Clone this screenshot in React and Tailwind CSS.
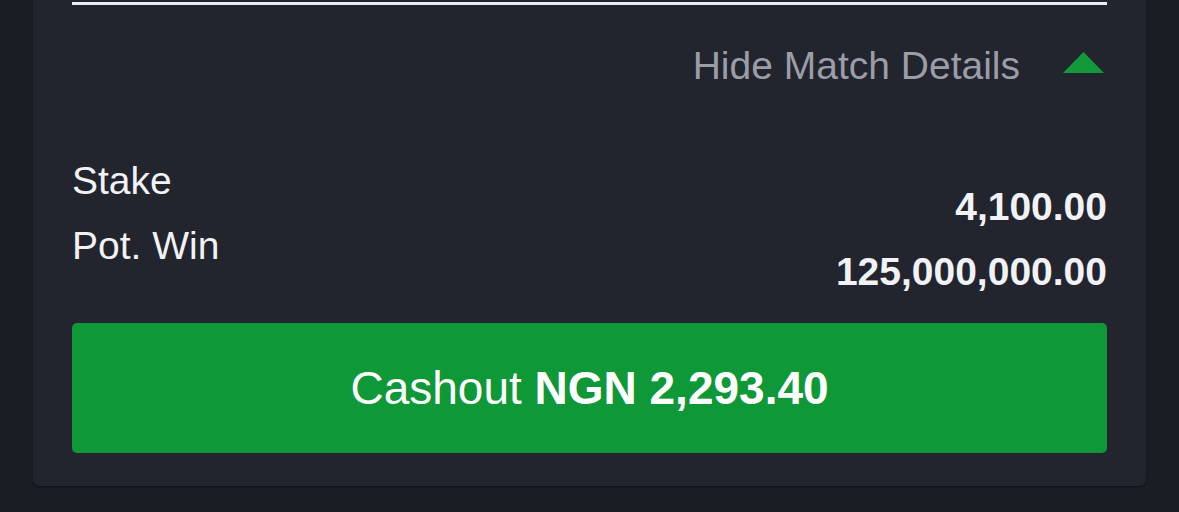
export default function App() {
  return (
    <div className="w-[1179px] h-[512px] bg-[#1b1d25] overflow-hidden" style={{ fontFamily: '"Liberation Sans", Arial, sans-serif' }}>
      <div className="ml-[33px] w-[1113px] bg-[#22252e] rounded-b-[7px] px-[39px] pt-[2px] pb-[33px] shadow-[0_1px_2px_rgba(0,0,0,0.35)]">
        <div className="h-[3px] bg-[#eceef3]" />
        <div className="mt-[36px] h-[50px] flex justify-end items-center">
          <span className="text-[39px] leading-[50px] text-[#9b9da7]">Hide Match Details</span>
          <svg width="41" height="21" viewBox="0 0 41 21" className="ml-[43px] mr-[3px] mt-[-7px]">
            <polygon points="20.5,0 41,21 0,21" fill="#129a3a" />
          </svg>
        </div>
        <div className="mt-[57px] flex justify-between text-[39px] text-[#f1f2f5]">
          <div className="flex flex-col leading-[65px]">
            <span>Stake</span>
            <span>Pot. Win</span>
          </div>
          <div className="flex flex-col items-end pt-[26px] leading-[65px] font-bold">
            <span>4,100.00</span>
            <span>125,000,000.00</span>
          </div>
        </div>
        <button className="mt-[19px] w-full h-[130px] bg-[#0f9837] rounded-[5px] flex items-center justify-center text-white text-[46px]">
          <span>Cashout&nbsp;</span>
          <span className="font-bold">NGN 2,293.40</span>
        </button>
      </div>
    </div>
  );
}
